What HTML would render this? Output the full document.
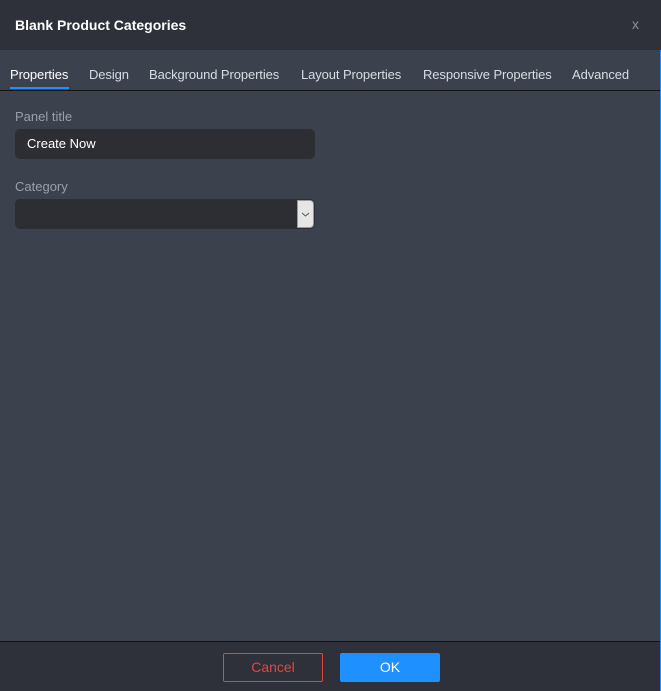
<!DOCTYPE html>
<html><head><style>
*{margin:0;padding:0;box-sizing:border-box}
body{width:661px;height:691px;background:#3b414d;font-family:"Liberation Sans",sans-serif;position:relative;overflow:hidden}
.hdr{position:absolute;left:0;top:0;width:661px;height:50px;background:#2e3139}
.hdr b{position:absolute;left:15px;top:17px;color:#fff;font-size:14px}
.x{position:absolute;left:632px;top:16px;color:#8a8f99;font-size:14px}
.tabs{position:absolute;left:0;top:50px;width:661px;height:41px;border-bottom:1px solid #111}
.tab{position:absolute;top:17px;font-size:13px;color:#d8dce3;letter-spacing:-0.1px}
.act{position:absolute;left:10px;top:87px;width:59px;height:2px;background:#1e90ff}
.lbl{position:absolute;left:15px;font-size:13px;color:#9aa0aa}
.inp{position:absolute;left:15px;width:300px;height:30px;background:#2c2e34;border-radius:5px;color:#fff;font-size:13px;padding:7px 12px}
.sel{position:absolute;left:297px;top:200px;width:17px;height:28px;background:#e6e6e6;border-radius:0 4px 4px 0;border:1px solid #999}
.ftr{position:absolute;left:0;top:641px;width:661px;height:50px;background:#2e3139;border-top:1px solid #111}
.btn{position:absolute;top:11px;width:100px;height:29px;font-size:14px;text-align:center;line-height:26px;border-radius:2px}
.edge{position:absolute;right:0;top:50px;width:1px;height:641px;background:#1e90ff}
</style></head><body>
<div class="hdr"><b>Blank Product Categories</b><span class="x">x</span></div>
<div class="tabs">
<span class="tab" style="left:10px;color:#fff">Properties</span>
<span class="tab" style="left:89px">Design</span>
<span class="tab" style="left:149px">Background Properties</span>
<span class="tab" style="left:301px">Layout Properties</span>
<span class="tab" style="left:423px">Responsive Properties</span>
<span class="tab" style="left:572px">Advanced</span>
</div>
<div class="act"></div>
<div class="lbl" style="top:109px">Panel title</div>
<div class="inp" style="top:129px">Create Now</div>
<div class="lbl" style="top:179px">Category</div>
<div class="inp" style="top:199px"></div>
<div class="sel"><svg width="15" height="26" viewBox="0 0 15 26"><path d="M4 12l3.5 3 3.5-3" stroke="#555" fill="none" stroke-width="1"/></svg></div>
<div class="ftr">
<div class="btn" style="left:223px;border:1px solid #e0483e;color:#e0483e">Cancel</div>
<div class="btn" style="left:340px;background:#1e90ff;color:#fff;line-height:28px">OK</div>
</div>
<div class="edge"></div>
</body></html>
